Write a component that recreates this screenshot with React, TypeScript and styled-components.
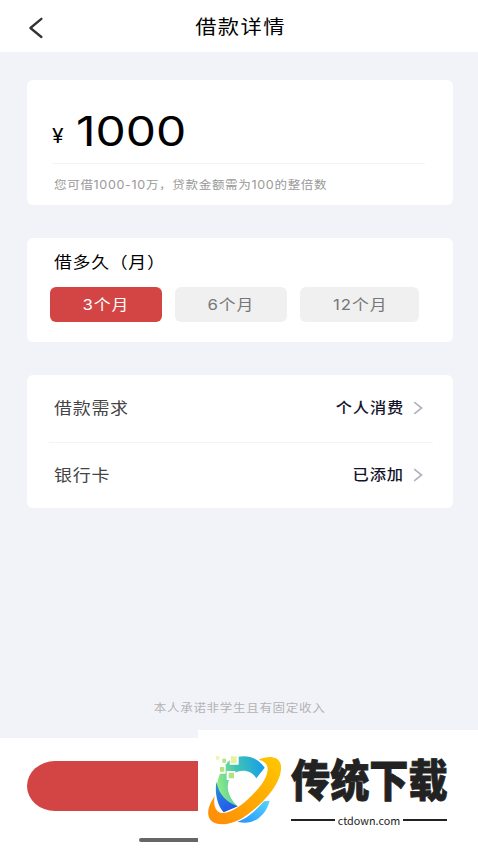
import React from "react";
import styled, { createGlobalStyle } from "styled-components";

const GlobalStyle = createGlobalStyle`
  * { box-sizing: border-box; }
  body {
    margin: 0;
    background: #f2f3f8;
    font-family: Inter, "Noto Sans CJK SC", sans-serif;
  }
`;

const Screen = styled.div`
  position: relative;
  display: flex;
  flex-direction: column;
  width: 478px;
  height: 850px;
  overflow: hidden;
  background: #f2f3f8;
`;

const Label = styled.span<{
  $size: number;
  $color?: string;
  $stretch?: number;
  $gap?: number;
  $weight?: number;
  $origin?: string;
  $stroke?: number;
}>`
  display: inline-block;
  flex: none;
  margin: 0;
  white-space: nowrap;
  line-height: 1;
  font-size: ${(p) => p.$size}px;
  font-weight: ${(p) => p.$weight ?? 400};
  color: ${(p) => p.$color ?? "#111"};
  letter-spacing: ${(p) => p.$gap ?? 0}px;
  -webkit-text-stroke: ${(p) => p.$stroke ?? 0}px currentColor;
  transform: scaleX(${(p) => p.$stretch ?? 1});
  transform-origin: ${(p) => p.$origin ?? "left"} center;
`;

const Header = styled.header`
  display: grid;
  grid-template-columns: 72px 1fr 69px;
  align-items: center;
  justify-items: center;
  flex: none;
  height: 52px;
  padding-top: 3px;
  background: #fff;
`;

const Cards = styled.main`
  display: flex;
  flex-direction: column;
  flex: none;
  gap: 33px;
  padding: 28px 25.5px 0 26.5px;
`;

const Card = styled.section<{ $height: number }>`
  height: ${(p) => p.$height}px;
  border-radius: 6px;
  background: #fff;
`;

const Amount = styled.div`
  display: flex;
  align-items: flex-start;
  height: 84px;
  margin: 0 28px 0 25px;
  padding-top: 31px;
  border-bottom: 1px solid #f4f4f5;
`;

const Currency = styled.span`
  display: flex;
  width: 24.5px;
  padding-top: 15px;
`;

const Hint = styled.div`
  padding: 16px 0 0 27px;
  line-height: 0;
`;

const TermTitle = styled.h2`
  margin: 0;
  padding: 16px 0 0 27px;
  height: 49px;
  line-height: 0;
`;

const Terms = styled.div`
  display: grid;
  grid-template-columns: 112px 111.5px 118.5px;
  gap: 13.5px;
  padding-left: 23px;
`;

const Term = styled.button<{ $active?: boolean }>`
  display: flex;
  align-items: center;
  justify-content: center;
  height: 35px;
  padding: 0 0 0 1px;
  border: 0;
  border-radius: 6px;
  font-family: inherit;
  background: ${(p) => (p.$active ? "#d34545" : "#f0f0f0")};
`;

const Row = styled.div`
  display: flex;
  align-items: center;
  justify-content: space-between;
  height: 66.5px;
  margin: 0 20px 0 22px;
  padding: 0 9.5px 0 5px;

  & + & {
    border-top: 1px solid #f4f4f5;
  }
`;

const Value = styled.div`
  display: flex;
  align-items: center;
  gap: 9px;
`;

const Pledge = styled.p`
  display: flex;
  justify-content: center;
  margin: auto 0 23.5px;
  padding-left: 2px;
`;

const Footer = styled.footer`
  flex: none;
  display: flex;
  flex-direction: column;
  height: 112px;
  padding: 22.5px 26px 0 26.5px;
  background: #fff;
`;

const Submit = styled.div`
  height: 50px;
  border-radius: 28px / 25px;
  background: #d34545;
`;

const HomeBar = styled.div`
  align-self: center;
  width: 200px;
  height: 4px;
  margin-top: 27.4px;
  border-radius: 2px;
  background: #666;
`;

const Watermark = styled.aside`
  position: absolute;
  right: 0;
  bottom: 0;
  display: flex;
  gap: 9px;
  width: 280px;
  height: 120px;
  padding: 23px 0 0 9px;
  background: #fff;
`;

const Brand = styled.div`
  width: 156px;
  padding-top: 6px;
`;

const Domain = styled.div`
  display: flex;
  align-items: center;
  gap: 3px;
  margin-top: 10px;
  color: #222;
  font: 10.8px/14px "Noto Sans CJK SC", sans-serif;

  &::before,
  &::after {
    content: "";
    flex: 1;
    height: 2px;
    background: #222;
  }
`;

function BackIcon() {
  return (
    <svg width="16" height="22" viewBox="0 0 16 22" fill="none">
      <path d="M13.4 1.8 2.4 11l11 9" stroke="#333" strokeWidth="2.3" strokeLinecap="round" strokeLinejoin="round" />
    </svg>
  );
}

function Chevron() {
  return (
    <svg width="10" height="14" viewBox="0 0 10 14" fill="none">
      <path d="M1.2 1.2 8.6 7l-7.4 5.8" stroke="#b1b1bc" strokeWidth="1.6" />
    </svg>
  );
}

function BrandMark() {
  return (
    <svg width="75" height="74" viewBox="36 84 225 222">
      <defs>
        <linearGradient id="orange" x1="0" y1="1" x2="1" y2="0">
          <stop offset="0" stopColor="#ff8a08" />
          <stop offset="1" stopColor="#ffc800" />
        </linearGradient>
        <linearGradient id="ring" x1="0" y1="0.4" x2="1" y2="0.2">
          <stop offset="0" stopColor="#91eb80" />
          <stop offset="0.45" stopColor="#3fc3b5" />
          <stop offset="1" stopColor="#159deb" />
        </linearGradient>
        <linearGradient id="deep" x1="0" y1="0" x2="0.5" y2="1">
          <stop offset="0" stopColor="#2696d4" />
          <stop offset="1" stopColor="#2457ee" />
        </linearGradient>
        <linearGradient id="base" x1="0" y1="1" x2="1" y2="0">
          <stop offset="0" stopColor="#2394ff" />
          <stop offset="1" stopColor="#55d5fb" />
        </linearGradient>
      </defs>
      <path d="M104 106C137 86 181 89 209 128L184 160C171 136 137 130 115 147C91 166 91 211 128 244L86 262C57 229 53 151 104 106Z" fill="url(#ring)" />
      <path d="M64 170C72 209 93 230 128 244L86 262C66 239 59 203 64 170Z" fill="url(#deep)" />
      <path d="M127 290C160 281 184 253 207 229L224 227C213 270 177 304 127 290Z" fill="url(#base)" />
      <path d="M191 104C222 90 262 92 258 134C254 184 193 248 139 281C99 304 46 306 40 270C37 249 49 229 59 213C55 237 59 257 76 263C113 272 171 217 201 176C219 149 232 114 191 104Z" fill="url(#orange)" />
      <path d="M104 90h27v29h-27zM71 121h21v25H71zM95 138h26v27H95zM80 98h16v18H80z" fill="#fff" />
      <path d="M107 94h18v20h-18z" fill="#e7f39b" />
      <path d="M63 93h10v11H63z" fill="#edf6ac" />
      <path d="M82 101h11v12H82zM75 126h13v14H75zM101 143h16v17h-16z" fill="#b2e37c" />
    </svg>
  );
}

const terms = [
  { count: "3", active: true },
  { count: "6", active: false },
  { count: "12", active: false },
];

const details = [
  { name: "借款需求", value: "个人消费" },
  { name: "银行卡", value: "已添加" },
];

export default function App() {
  return (
    <>
      <GlobalStyle />
      <Screen>
        <Header>
          <BackIcon />
          <Label as="h1" $size={19} $stretch={1.12} $gap={1.3} $color="#000" $origin="center">
            借款详情
          </Label>
        </Header>
        <Cards>
          <Card $height={125}>
            <Amount>
              <Currency>
                <Label $size={20} $stretch={1.05} $color="#000">¥</Label>
              </Currency>
              <Label $size={41} $stretch={1.17} $color="#000">1000</Label>
            </Amount>
            <Hint>
              <Label $size={11.2} $stretch={1.12} $gap={0.6} $color="#999">
                您可借1000-10万，贷款金额需为100的整倍数
              </Label>
            </Hint>
          </Card>
          <Card $height={104}>
            <TermTitle>
              <Label $size={16} $stretch={1.12} $gap={0.6} $color="#000">
                借多久（月）
              </Label>
            </TermTitle>
            <Terms>
              {terms.map((term) => (
                <Term key={term.count} $active={term.active}>
                  <Label $size={15} $stretch={1.12} $gap={0.8} $origin="center" $color={term.active ? "#fff" : "#777"}>
                    {term.count}个月
                  </Label>
                </Term>
              ))}
            </Terms>
          </Card>
          <Card $height={133}>
            {details.map((detail) => (
              <Row key={detail.name}>
                <Label $size={16} $stretch={1.12} $gap={0.7} $color="#444">{detail.name}</Label>
                <Value>
                  <Label $size={14.5} $stretch={1.12} $gap={0.8} $color="#15152d" $weight={500} $origin="right">
                    {detail.value}
                  </Label>
                  <Chevron />
                </Value>
              </Row>
            ))}
          </Card>
        </Cards>
        <Pledge>
          <Label $size={11.2} $stretch={1.12} $gap={0.6} $color="#b3b3b6" $origin="center">
            本人承诺非学生且有固定收入
          </Label>
        </Pledge>
        <Footer>
          <Submit />
          <HomeBar />
        </Footer>
        <Watermark>
          <BrandMark />
          <Brand>
            <Label $size={44} $stretch={0.89} $weight={900} $stroke={0.8} $color="#222">传统下载</Label>
            <Domain>ctdown.com</Domain>
          </Brand>
        </Watermark>
      </Screen>
    </>
  );
}
